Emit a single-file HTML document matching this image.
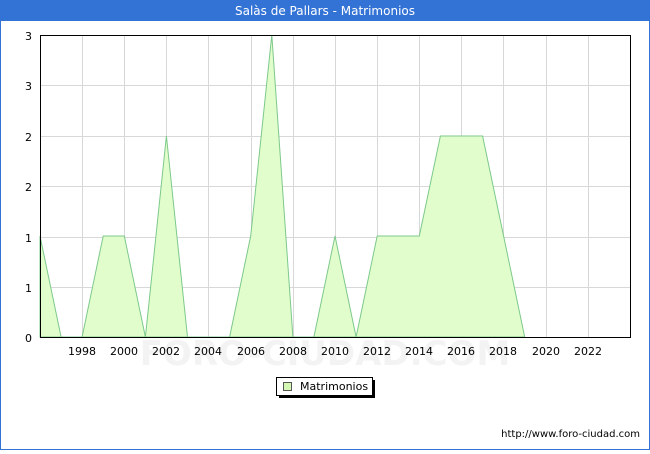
<!DOCTYPE html>
<html><head><meta charset="utf-8"><style>
body{margin:0;width:650px;height:450px;overflow:hidden;background:#fff;font-family:"DejaVu Sans","Liberation Sans",sans-serif}
</style></head><body>
<svg width="650" height="450" xmlns="http://www.w3.org/2000/svg" font-family="DejaVu Sans, Liberation Sans, sans-serif">
<rect x="0.5" y="0.5" width="649" height="449" fill="#fff" stroke="#3373d6"/>
<rect x="0" y="0" width="650" height="21" fill="#3373d6"/>
<text x="325" y="15" fill="#fff" font-size="12" text-anchor="middle">Salàs de Pallars - Matrimonios</text>
<g stroke="#d8d8d8" stroke-width="1">
<path d="M82.5 35V337M124.5 35V337M166.5 35V337M208.5 35V337M251.5 35V337M293.5 35V337M335.5 35V337M377.5 35V337M419.5 35V337M461.5 35V337M503.5 35V337M546.5 35V337M588.5 35V337"/>
<path d="M40 85.5H630M40 136.5H630M40 186.5H630M40 237.5H630M40 287.5H630"/>
</g>
<text x="325" y="365" fill="#eeeeee" font-size="34" text-anchor="middle" font-weight="bold" opacity="0.7">FORO-CIUDAD.COM</text>
<path d="M40 337L40 236L61.1 337L82.1 337L103.2 236L124.3 236L145.4 337L166.4 136L187.5 337L229.6 337L250.7 236L271.8 35L292.9 337L313.9 337L335 236L356.1 337L377.2 236L419.3 236L440.4 136L482.6 136L503.6 236L524.7 337Z" fill="#e2fdcc" stroke="#7cc98a" stroke-width="1"/>
<rect x="40.5" y="35.5" width="590" height="302" fill="none" stroke="#000"/>
<g font-size="11" fill="#000" text-anchor="end">
<text x="32" y="40">3</text><text x="32" y="90">3</text><text x="32" y="141">2</text><text x="32" y="191">2</text><text x="32" y="242">1</text><text x="32" y="292">1</text><text x="32" y="342">0</text>
</g>
<g font-size="11" fill="#000" text-anchor="middle">
<text x="82" y="355">1998</text><text x="124" y="355">2000</text><text x="166" y="355">2002</text><text x="208" y="355">2004</text><text x="251" y="355">2006</text><text x="293" y="355">2008</text><text x="335" y="355">2010</text><text x="377" y="355">2012</text><text x="419" y="355">2014</text><text x="461" y="355">2016</text><text x="503" y="355">2018</text><text x="546" y="355">2020</text><text x="588" y="355">2022</text>
</g>
<rect x="279" y="380" width="96" height="18" fill="#000"/>
<rect x="276.5" y="377.5" width="96" height="18" fill="#fff" stroke="#000"/>
<rect x="283.5" y="382.5" width="8" height="8" fill="#d4f7b4" stroke="#555"/>
<text x="300" y="390" font-size="11" fill="#000">Matrimonios</text>
<text x="640" y="437" font-size="10" fill="#000" text-anchor="end">http://www.foro-ciudad.com</text>
</svg>
</body></html>
